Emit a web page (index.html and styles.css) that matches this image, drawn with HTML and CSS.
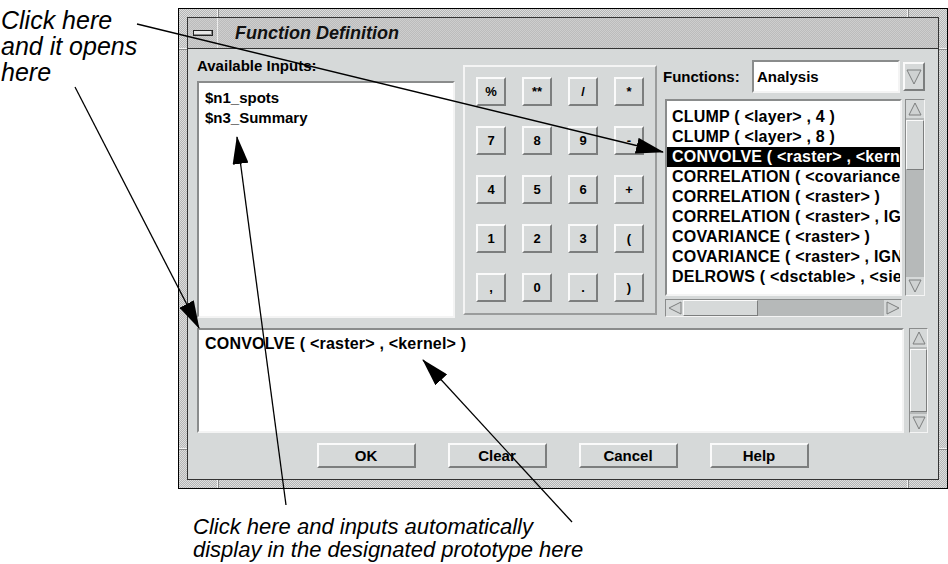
FILE: index.html
```html
<!DOCTYPE html>
<html lang="en">
<head>
  <meta charset="UTF-8">
  <title>Function Definition</title>
  <link rel="stylesheet" href="styles.css">
</head>
<body>
  <div class="page">
    <div class="top">
      <p class="note note-top">Click here<br>and it opens<br>here</p>

      <div class="window">
        <!-- resize notches in the frame -->
        <span class="notch notch-top notch-l"></span>
        <span class="notch notch-top notch-r"></span>
        <span class="notch notch-bottom notch-l"></span>
        <span class="notch notch-bottom notch-r"></span>
        <span class="notch notch-side notch-left notch-t"></span>
        <span class="notch notch-side notch-left notch-b"></span>
        <span class="notch notch-side notch-right notch-t"></span>
        <span class="notch notch-side notch-right notch-b"></span>

        <div class="window-inner">
          <div class="titlebar">
            <div class="menu-area"><span class="menu-btn"></span></div>
            <span class="title">Function Definition</span>
          </div>

          <div class="content">
            <div class="upper">
              <div class="inputs">
                <div class="label">Available Inputs:</div>
                <ul class="list inputs-list">
                  <li>$n1_spots</li>
                  <li>$n3_Summary</li>
                </ul>
              </div>

              <div class="keypad">
                <button class="key">%</button>
                <button class="key">**</button>
                <button class="key">/</button>
                <button class="key">*</button>
                <button class="key">7</button>
                <button class="key">8</button>
                <button class="key">9</button>
                <button class="key">-</button>
                <button class="key">4</button>
                <button class="key">5</button>
                <button class="key">6</button>
                <button class="key">+</button>
                <button class="key">1</button>
                <button class="key">2</button>
                <button class="key">3</button>
                <button class="key">(</button>
                <button class="key">,</button>
                <button class="key">0</button>
                <button class="key">.</button>
                <button class="key">)</button>
              </div>

              <div class="functions">
                <div class="func-head">
                  <span class="label">Functions:</span>
                  <div class="combo">Analysis</div>
                  <span class="combo-btn">
                    <svg width="16" height="18" viewBox="0 0 16 18"><polygon class="tri" points="1,2 15,2 8,16"/></svg>
                  </span>
                </div>

                <div class="func-body">
                  <ul class="list func-list">
                    <li>CLUMP ( &lt;layer&gt; , 4 )</li>
                    <li>CLUMP ( &lt;layer&gt; , 8 )</li>
                    <li class="selected">CONVOLVE ( &lt;raster&gt; , &lt;kern</li>
                    <li>CORRELATION ( &lt;covariance</li>
                    <li>CORRELATION ( &lt;raster&gt; )</li>
                    <li>CORRELATION ( &lt;raster&gt; , IG</li>
                    <li>COVARIANCE ( &lt;raster&gt; )</li>
                    <li>COVARIANCE ( &lt;raster&gt; , IGN</li>
                    <li>DELROWS ( &lt;dsctable&gt; , &lt;sie</li>
                  </ul>
                  <div class="vscroll">
                    <span class="arrow"><svg width="14" height="14" viewBox="0 0 14 14"><polygon class="tri" points="7,1 13,13 1,13"/></svg></span>
                    <div class="track"><span class="thumb"></span></div>
                    <span class="arrow"><svg width="14" height="14" viewBox="0 0 14 14"><polygon class="tri" points="1,1 13,1 7,13"/></svg></span>
                  </div>
                </div>

                <div class="hscroll">
                  <span class="arrow"><svg width="14" height="14" viewBox="0 0 14 14"><polygon class="tri" points="1,7 13,1 13,13"/></svg></span>
                  <div class="track"><span class="thumb"></span></div>
                  <span class="arrow"><svg width="14" height="14" viewBox="0 0 14 14"><polygon class="tri" points="1,1 13,7 1,13"/></svg></span>
                </div>
              </div>
            </div>

            <div class="editor">
              <div class="edit-box">CONVOLVE ( &lt;raster&gt; , &lt;kernel&gt; )</div>
              <div class="vscroll vscroll-full">
                <span class="arrow"><svg width="14" height="14" viewBox="0 0 14 14"><polygon class="tri" points="7,1 13,13 1,13"/></svg></span>
                <div class="track"><span class="thumb"></span></div>
                <span class="arrow"><svg width="14" height="14" viewBox="0 0 14 14"><polygon class="tri" points="1,1 13,1 7,13"/></svg></span>
              </div>
            </div>

            <div class="actions">
              <button class="btn">OK</button>
              <button class="btn">Clear</button>
              <button class="btn">Cancel</button>
              <button class="btn">Help</button>
            </div>
          </div>
        </div>
      </div>
    </div>

    <p class="note note-bottom">Click here and inputs automatically<br>display in the designated prototype here</p>

    <!-- callout arrows drawn over the dialog -->
    <svg class="arrows" width="948" height="564" viewBox="0 0 948 564">
      <defs>
        <marker id="head" markerUnits="userSpaceOnUse" markerWidth="28" markerHeight="16" refX="27" refY="8" orient="auto">
          <path d="M0 0 L28 8 L0 16 Z" fill="#000"/>
        </marker>
      </defs>
      <line x1="137" y1="24" x2="663" y2="152"/>
      <line x1="75" y1="87" x2="199" y2="328"/>
      <line x1="286" y1="505" x2="237" y2="137"/>
      <line x1="572" y1="522" x2="423" y2="360"/>
    </svg>
  </div>
</body>
</html>
```

FILE: styles.css
```css
body {
  margin: 0;
  font-family: "Liberation Sans", Arial, sans-serif;
  background: #fff;
  color: #000;
}

.page {
  position: relative;
  width: 948px;
  height: 564px;
  overflow: hidden;
}

.top {
  display: flex;
  align-items: flex-start;
}

/* annotation text */
.note {
  margin: 0;
  font-style: italic;
  font-size: 22px;
  line-height: 25px;
}

.note-top {
  width: 178px;
  flex-shrink: 0;
  padding: 7px 0 0 1px;
  box-sizing: border-box;
  font-size: 25px;
  line-height: 26px;
}

.note-bottom {
  margin-top: 26px;
  padding-left: 193px;
  line-height: 23px;
}

/* window frame */
.window {
  position: relative;
  margin-top: 8px;
  width: 770px;
  height: 481px;
  flex-shrink: 0;
  box-sizing: border-box;
  border: 1px solid #000;
  padding: 8px;
  background: repeating-conic-gradient(#b4b5b5 0 25%, #dedede 0 50%) 0 0 / 2px 2px;
}

.notch {
  position: absolute;
  background: #f2f2f2;
  box-shadow: 1px 0 0 #888;
}

.notch-top,
.notch-bottom {
  width: 1px;
  height: 8px;
}

.notch-top { top: 0; }
.notch-bottom { bottom: 0; }
.notch-l { left: 38px; }
.notch-r { left: 728px; }

.notch-side {
  width: 8px;
  height: 1px;
  box-shadow: 0 1px 0 #888;
}

.notch-left { left: 0; }
.notch-right { right: 0; }
.notch-t { top: 39px; }
.notch-b { top: 439px; }

.window-inner {
  height: 100%;
  box-sizing: border-box;
  border: 1px solid #333;
  display: flex;
  flex-direction: column;
}

.titlebar {
  height: 30px;
  flex-shrink: 0;
  display: flex;
  align-items: center;
  border-bottom: 1px solid #333;
  background: repeating-conic-gradient(#bcbcbc 0 25%, #cecece 0 50%) 0 0 / 2px 2px;
}

.menu-area {
  width: 29px;
  height: 100%;
  display: flex;
  align-items: center;
  justify-content: center;
  border-right: 1px solid #ececec;
}

.menu-btn {
  width: 18px;
  height: 4px;
  border: 1px solid #222;
  background: #e8e8e8;
  box-shadow: inset -1px -1px 0 #8a8a8a;
}

.title {
  margin-left: 17px;
  font-size: 18px;
  font-weight: bold;
  font-style: italic;
  color: #111;
}

/* dialog body */
.content {
  flex: 1;
  background: #d6d9d9;
  padding: 9px 10px 10px 9px;
  display: flex;
  flex-direction: column;
  font-size: 15px;
  font-weight: bold;
}

.upper {
  display: grid;
  grid-template-columns: 258px 194px 1fr;
  column-gap: 8px;
  height: 260px;
}

.label {
  line-height: 16px;
}

.inputs .label {
  margin-bottom: 7px;
}

.list {
  margin: 0;
  list-style: none;
  background: #fff;
  border: 2px solid;
  border-color: #8a8c8c #f4f4f4 #f4f4f4 #8a8c8c;
  box-sizing: border-box;
  overflow: hidden;
}

.list li {
  line-height: 20px;
  padding-left: 6px;
  white-space: nowrap;
}

.inputs-list {
  height: 237px;
  padding: 5px 0 0;
}

.keypad {
  margin-top: 7px;
  height: 250px;
  box-sizing: border-box;
  border: 2px solid;
  border-color: #f4f4f4 #9a9c9c #9a9c9c #f4f4f4;
  padding: 10px 11px;
  display: grid;
  grid-template-columns: repeat(4, 30px);
  grid-auto-rows: 29px;
  column-gap: 16px;
  row-gap: 20px;
}

.key,
.btn {
  padding: 0;
  font-family: inherit;
  font-weight: bold;
  color: #000;
  background: #d6d9d9;
  border: 2px solid;
  border-color: #fafafa #7c7e7e #7c7e7e #fafafa;
}

.key {
  font-size: 13px;
}

.functions {
  display: flex;
  flex-direction: column;
}

.func-head {
  margin-top: 2px;
  height: 33px;
  display: flex;
  align-items: center;
}

.func-head .label {
  width: 87px;
  flex-shrink: 0;
  margin-left: -2px;
  padding-right: 2px;
}

.combo {
  width: 148px;
  height: 33px;
  box-sizing: border-box;
  background: #fff;
  border: 2px solid;
  border-color: #8a8c8c #f4f4f4 #f4f4f4 #8a8c8c;
  padding-left: 3px;
  line-height: 29px;
}

.combo-btn {
  margin-left: 3px;
  width: 22px;
  height: 29px;
  box-sizing: border-box;
  display: flex;
  align-items: center;
  justify-content: center;
  border: 2px solid;
  border-color: #fafafa #7c7e7e #7c7e7e #fafafa;
}

.tri {
  fill: #cfd2d2;
  stroke: #7c7e7e;
  stroke-width: 1;
}

.func-body {
  margin-top: 6px;
  height: 197px;
  display: flex;
  gap: 3px;
}

.func-list {
  width: 237px;
  height: 197px;
  padding: 6px 0 0;
  font-size: 16px;
  letter-spacing: 0.2px;
}

.func-list li {
  padding-left: 5px;
}

.func-list .selected {
  background: #000;
  color: #fff;
}

/* scrollbars */
.vscroll {
  width: 20px;
  box-sizing: border-box;
  display: flex;
  flex-direction: column;
  background: #b6b9b9;
  border: 1px solid;
  border-color: #8a8c8c #f4f4f4 #f4f4f4 #8a8c8c;
}

.vscroll .arrow {
  height: 18px;
}

.arrow {
  flex-shrink: 0;
  display: flex;
  align-items: center;
  justify-content: center;
  background: #d6d9d9;
}

.track {
  flex: 1;
  display: flex;
}

.thumb {
  display: block;
  box-sizing: border-box;
  background: #d6d9d9;
  border: 1px solid;
  border-color: #fafafa #7c7e7e #7c7e7e #fafafa;
}

.vscroll .track {
  flex-direction: column;
}

.vscroll .thumb {
  height: 50px;
  margin-top: 2px;
}

.vscroll-full {
  width: 19px;
}

.vscroll-full .thumb {
  flex: 1;
  height: auto;
  margin: 2px 0;
}

.hscroll {
  margin-top: 3px;
  width: 237px;
  height: 18px;
  box-sizing: border-box;
  display: flex;
  background: #b6b9b9;
  border: 1px solid;
  border-color: #8a8c8c #f4f4f4 #f4f4f4 #8a8c8c;
}

.hscroll .arrow {
  width: 17px;
}

.hscroll .thumb {
  width: 75px;
}

.editor {
  margin-top: 10px;
  height: 105px;
  display: flex;
  gap: 5px;
}

.edit-box {
  flex: 1;
  background: #fff;
  border: 2px solid;
  border-color: #8a8c8c #f4f4f4 #f4f4f4 #8a8c8c;
  padding: 4px 6px;
  font-size: 16px;
  letter-spacing: 0.2px;
  line-height: 20px;
  white-space: nowrap;
}

.actions {
  margin-top: 10px;
  display: flex;
  justify-content: center;
  gap: 32px;
}

.btn {
  width: 99px;
  height: 25px;
  font-size: 15px;
}

/* callout arrows */
.arrows {
  position: absolute;
  top: 0;
  left: 0;
  pointer-events: none;
}

.arrows line {
  stroke: #000;
  stroke-width: 1.3;
  marker-end: url(#head);
}
```
